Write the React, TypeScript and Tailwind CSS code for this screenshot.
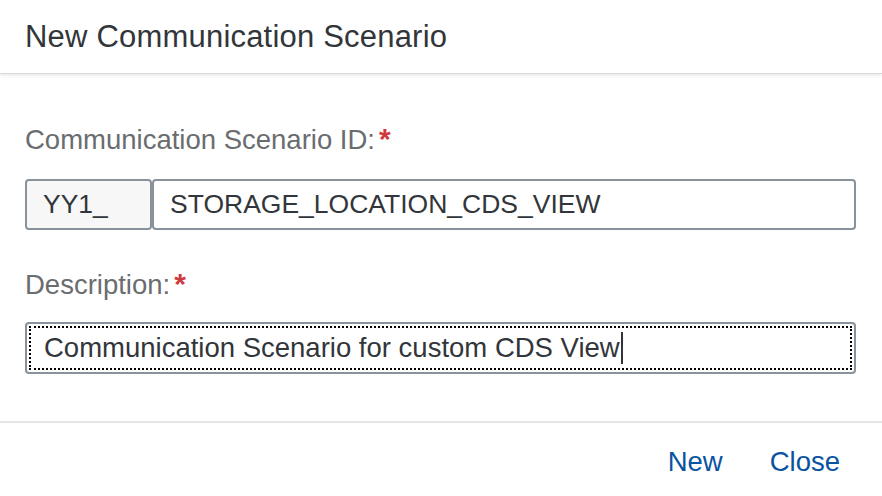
import React from 'react';

const font = { fontFamily: '"Liberation Sans", Arial, sans-serif' };

export default function App() {
  return (
    <div className="w-[882px] h-[496px] bg-white flex flex-col overflow-hidden" style={font}>
      {/* Header */}
      <div className="h-[74px] shrink-0 flex items-center px-[25px] border-b border-[#d9d9d9] shadow-[0_2px_3px_rgba(0,0,0,0.08)] relative z-10">
        <h1 className="text-[31px] text-[#32363a] tracking-[0.2px] pt-[1px]">New Communication Scenario</h1>
      </div>

      {/* Body */}
      <div className="flex-1 flex flex-col px-[25px] pt-[50px]">
        <label className="text-[27.5px] text-[#6a6d70] leading-[32px] h-[32px]">
          Communication Scenario ID:<span className="text-[#cf3a3e] font-bold ml-[4px] text-[30px] leading-none">*</span>
        </label>
        <div className="flex mt-[23px] w-[831px] h-[51px]">
          <div className="w-[127px] h-full bg-[#f7f7f7] border-2 border-[#89919a] rounded-[4px] flex items-center pl-[16px] text-[26.5px] text-[#32363a]">
            YY1_
          </div>
          <div className="flex-1 h-full border-2 border-[#89919a] rounded-[4px] flex items-center pl-[16px] text-[26.5px] text-[#32363a]">
            STORAGE_LOCATION_CDS_VIEW
          </div>
        </div>

        <label className="text-[27.5px] text-[#6a6d70] leading-[32px] h-[32px] mt-[39px]">
          Description:<span className="text-[#cf3a3e] font-bold ml-[4px] text-[30px] leading-none">*</span>
        </label>
        <div className="mt-[21px] w-[831px] h-[52px] border-2 border-[#89919a] rounded-[4px] p-[2px]">
          <div className="h-full border-2 border-dotted border-black flex items-center pl-[13px] text-[27.5px] text-[#32363a]">
            Communication Scenario for custom CDS View
            <span className="inline-block w-[2px] h-[32px] bg-[#32363a] ml-[1px]" />
          </div>
        </div>
      </div>

      {/* Footer */}
      <div className="h-[75px] shrink-0 border-t-2 border-[#e5e5e5] flex items-center justify-end gap-[47px] pr-[42px] pt-[4px]">
        <button className="text-[27.5px] text-[#0854a0]">New</button>
        <button className="text-[27.5px] text-[#0854a0]">Close</button>
      </div>
    </div>
  );
}
